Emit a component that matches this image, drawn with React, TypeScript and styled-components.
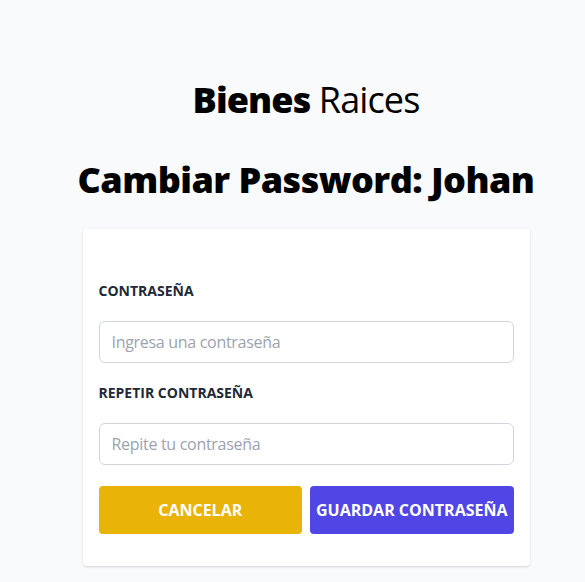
import React from "react";
import styled, { createGlobalStyle } from "styled-components";

const Global = createGlobalStyle`
  html, body { margin: 0; padding: 0; background: #f9fafb; }
  body { font-family: "Open Sans", "Noto Sans", sans-serif; color: #000; }
  * { box-sizing: border-box; }
`;

const Page = styled.main`
  padding: 80px 0 16px 27px;
`;

const Container = styled.div`
  display: flex;
  flex-direction: column;
  align-items: center;
`;

const Brand = styled.h1`
  margin: 0;
  font-size: 36px;
  line-height: 40px;
  font-weight: 400;
  letter-spacing: -0.9px;
  text-align: center;
`;

const BrandStrong = styled.span`
  font-weight: 800;
`;

const Heading = styled.h2`
  margin: 40px 0 0;
  font-size: 36px;
  line-height: 40px;
  font-weight: 800;
  letter-spacing: -0.55px;
  text-align: center;
`;

const Card = styled.form`
  margin-top: 29px;
  width: 447px;
  background: #fff;
  padding: 52px 16px 32px;
  border-radius: 4px;
  box-shadow: 0 1px 3px rgba(0,0,0,0.1), 0 1px 2px rgba(0,0,0,0.06);
  display: flex;
  flex-direction: column;
`;

const Field = styled.div`
  display: flex;
  flex-direction: column;
  gap: 20px;
  margin-bottom: 20px;
`;

const Label = styled.label`
  font-size: 14px;
  line-height: 20px;
  font-weight: 700;
  color: #1f2937;
  text-transform: uppercase;
`;

const Input = styled.input`
  width: 100%;
  height: 42px;
  padding: 0 12px;
  border: 1px solid #d1d5db;
  border-radius: 6px;
  font-family: inherit;
  font-size: 16px;
  letter-spacing: -0.3px;
  color: #111827;
  background: #fff;
  &::placeholder { color: #9ca3af; }
`;

const Actions = styled.div`
  display: grid;
  grid-template-columns: 1fr 1fr;
  gap: 8px;
  margin-top: 1px;
`;

const Button = styled.button<{ $variant: "cancel" | "save" }>`
  height: 48px;
  border: none;
  border-radius: 4px;
  background: ${(p) => (p.$variant === "cancel" ? "#eab308" : "#4f46e5")};
  color: #fff;
  font-family: inherit;
  font-size: 16px;
  font-weight: 700;
  text-transform: uppercase;
  cursor: pointer;
  padding: 0;
`;

export default function App() {
  return (
    <>
      <Global />
      <Page>
        <Container>
          <Brand>
            <BrandStrong>Bienes</BrandStrong> Raices
          </Brand>
          <Heading>Cambiar Password: Johan</Heading>
          <Card onSubmit={(e) => e.preventDefault()}>
            <Field>
              <Label htmlFor="password">Contraseña</Label>
              <Input id="password" type="password" placeholder="Ingresa una contraseña" />
            </Field>
            <Field>
              <Label htmlFor="repetir">Repetir Contraseña</Label>
              <Input id="repetir" type="password" placeholder="Repite tu contraseña" />
            </Field>
            <Actions>
              <Button type="button" $variant="cancel">Cancelar</Button>
              <Button type="submit" $variant="save">Guardar Contraseña</Button>
            </Actions>
          </Card>
        </Container>
      </Page>
    </>
  );
}
